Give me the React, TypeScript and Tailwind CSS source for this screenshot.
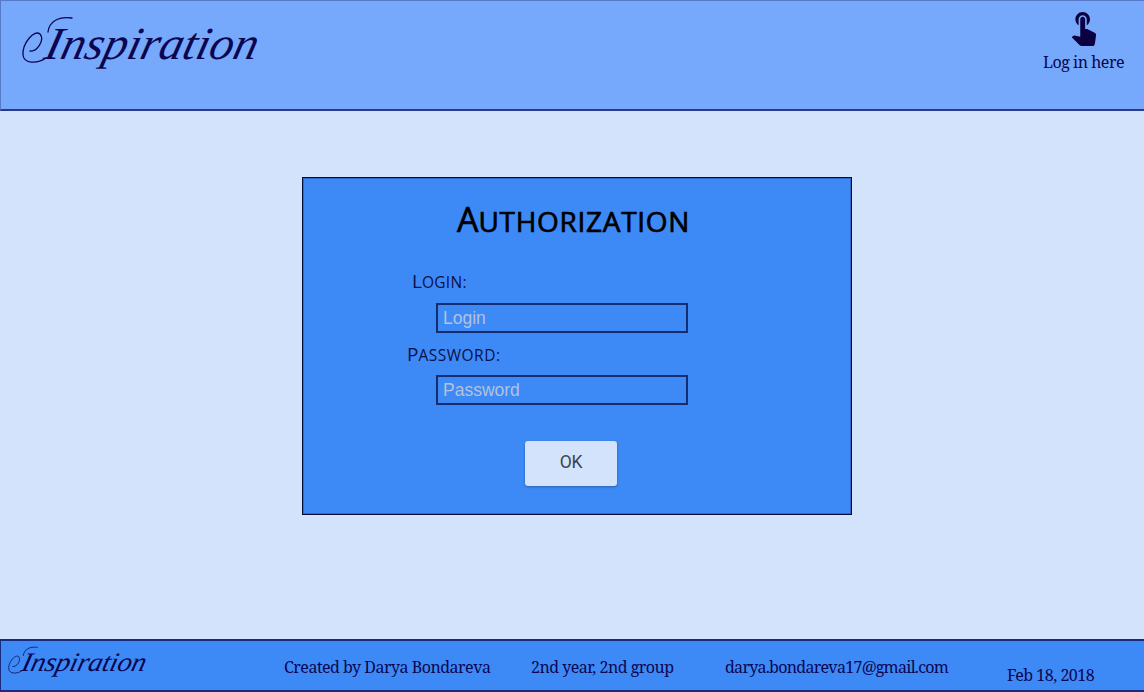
import React from "react";

const serif = "font-['Noto_Serif','Liberation_Serif',serif] text-[16px] tracking-[-0.5px] leading-6";

function Logo({ className }: { className: string }) {
  return (
    <svg viewBox="0 0 240 60" className={className} role="img">
      <text
        x="34"
        y="45"
        transform="skewX(-14)"
        textLength="212"
        lengthAdjust="spacingAndGlyphs"
        className="fill-[#0c0650] font-['Liberation_Serif',serif] text-[46px] italic"
      >
        Inspiration
      </text>
      <path
        d="M10 37C17 38 25 26 20 20C14 15 2 30 3 41C4 50 17 50 26 44M28 18C29 8 38 2 52 4"
        fill="none"
        stroke="#0c0650"
        strokeWidth="1.3"
        strokeLinecap="round"
      />
    </svg>
  );
}

function SmallCaps({ first, rest, className, restClass }: { first: string; rest: string; className: string; restClass: string }) {
  return (
    <span className={`block whitespace-nowrap font-['Open_Sans',sans-serif] ${className}`}>
      {first}
      <span className={`uppercase ${restClass}`}>{rest}</span>
    </span>
  );
}

function Field({ type, placeholder }: { type: string; placeholder: string }) {
  return (
    <input
      type={type}
      placeholder={placeholder}
      className="ml-[133px] block h-[30px] w-[252px] border-2 border-[#142c70] bg-transparent px-[5px] font-['Liberation_Sans',sans-serif] text-[17.5px] placeholder:text-[#b3c2dc] placeholder:opacity-100 outline-none"
    />
  );
}

export default function App() {
  return (
    <div className="flex h-[692px] w-[1144px] flex-col overflow-hidden bg-[#d4e3fc] text-[#0c0650]">
      <header className="flex h-[111px] shrink-0 justify-between border border-b-2 border-r-0 border-[#5779c8] border-b-[#2a3a86] bg-[#76a9fb] pl-[19px] pr-[20px]">
        <Logo className="mt-[13px] h-[60px] w-[240px] overflow-visible" />
        <a href="#" className="flex flex-col items-center">
          <svg viewBox="0 0 24 24" className="mt-[6px] h-[39px] w-[39px] fill-[#0c0040]">
            <path d="M9 11.24V7.5C9 6.12 10.12 5 11.5 5S14 6.12 14 7.5v3.74c1.21-.81 2-2.18 2-3.74C16 5.01 13.99 3 11.5 3S7 5.01 7 7.5c0 1.56.79 2.93 2 3.74zm9.84 4.63l-4.54-2.26c-.17-.07-.35-.11-.54-.11H13v-6c0-.83-.67-1.5-1.5-1.5S10 6.67 10 7.5v10.74l-3.43-.72c-.08-.01-.15-.03-.24-.03-.31 0-.59.13-.79.33l-.79.8 4.94 4.94c.27.27.65.44 1.06.44h6.79c.75 0 1.33-.55 1.44-1.28l.75-5.27c.01-.07.02-.14.02-.2 0-.62-.38-1.16-.91-1.38z" />
          </svg>
          <span className={`mt-[4px] whitespace-nowrap ${serif}`}>Log in here</span>
        </a>
      </header>

      <main className="flex-1 pl-[302px] pt-[66px]">
        <form className="flex h-[338px] w-[550px] flex-col border border-[#050b38] bg-[#3d8af7] pl-px pt-px shadow-[inset_0_0_0_1px_rgba(10,30,90,0.3)]">
          <h1 className="ml-[153px] mt-[18px] h-[44px] text-black">
            <SmallCaps first="A" rest="uthorization" className="text-[34px] leading-[44px] [-webkit-text-stroke:0.7px_black]" restClass="text-[28px] tracking-[0.7px]" />
          </h1>
          <label className="ml-[108px] mt-[28px] h-[24px] text-[#0b1147]">
            <SmallCaps first="L" rest="ogin:" className="text-[19px] leading-6" restClass="text-[15.5px] tracking-[0.3px]" />
          </label>
          <div className="-ml-px mt-[10px]">
            <Field type="text" placeholder="Login" />
          </div>
          <label className="ml-[103px] mt-[9px] h-[24px] text-[#0b1147]">
            <SmallCaps first="P" rest="assword:" className="text-[19px] leading-6" restClass="text-[15.5px] tracking-[0.5px]" />
          </label>
          <div className="-ml-px mt-[9px]">
            <Field type="password" placeholder="Password" />
          </div>
          <button
            type="button"
            className="ml-[221px] mt-[36px] h-[45px] w-[92px] rounded-[3px] bg-[#d4e3fc] pb-[3px] font-['Roboto',sans-serif] text-[17.5px] tracking-[-0.3px] text-[#3b4250] shadow-[0_1px_3px_rgba(0,0,0,0.3)]"
          >
            OK
          </button>
        </form>
      </main>

      <footer className={`flex h-[53px] shrink-0 border-y-2 border-l border-[#1b2b7c] bg-[#3d8af7] ${serif}`}>
        <Logo className="mt-[4px] ml-[6px] h-[35px] w-[140px] shrink-0 overflow-visible" />
        <span className="ml-[137px] mt-[14px] w-[247px] shrink-0 whitespace-nowrap">Created by Darya Bondareva</span>
        <span className="mt-[14px] w-[194px] shrink-0 whitespace-nowrap">2nd year, 2nd group</span>
        <span className="mt-[14px] w-[282px] shrink-0 whitespace-nowrap tracking-[-0.72px]">darya.bondareva17@gmail.com</span>
        <span className="mt-[22px] whitespace-nowrap">Feb 18, 2018</span>
      </footer>
    </div>
  );
}
